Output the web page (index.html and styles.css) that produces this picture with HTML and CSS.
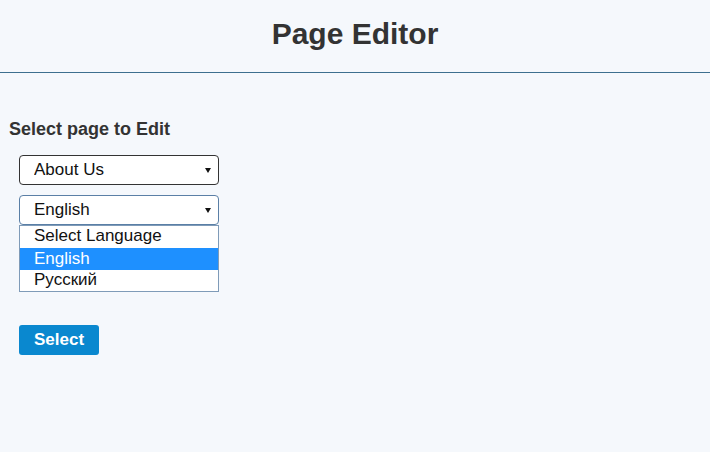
FILE: index.html
```html
<!DOCTYPE html>
<html lang="en">
<head>
    <meta charset="UTF-8">
    <meta name="viewport" content="width=device-width, initial-scale=1.0">
    <title>Page Editor</title>
    <link rel="stylesheet" href="styles.css">
</head>
<body>
    <header class="page-header">
        <h1>Page Editor</h1>
    </header>
    <main class="content">
        <form class="edit-form">
            <label class="form-label" for="pageSelect">Select page to Edit</label>
            <div class="select-wrap">
                <select id="pageSelect" class="form-select">
                    <option>About Us</option>
                </select>
            </div>
            <!-- Language picker, shown open -->
            <div class="select-wrap is-open">
                <select id="langSelect" class="form-select">
                    <option>English</option>
                </select>
                <ul class="select-list">
                    <li>Select Language</li>
                    <li class="active">English</li>
                    <li>Русский</li>
                </ul>
            </div>
            <button type="submit" class="btn-select">Select</button>
        </form>
    </main>
</body>
</html>
```

FILE: styles.css
```css
body {
    margin: 0;
    font-family: 'Liberation Sans', Arial, sans-serif;
    background-color: #f5f8fc;
    color: #333;
}

.page-header {
    height: 73px;
    box-sizing: border-box;
    padding-top: 19px;
    border-bottom: 1px solid #3d6f8f;
    text-align: center;
}

.page-header h1 {
    margin: 0;
    font-size: 30px;
    line-height: 1;
    font-weight: bold;
    color: #333;
}

.content {
    padding: 46px 0 0 9px;
}

.edit-form {
    display: flex;
    flex-direction: column;
    align-items: flex-start;
}

.form-label {
    font-size: 18px;
    line-height: 21px;
    font-weight: bold;
    margin-bottom: 15px;
}

.select-wrap {
    position: relative;
    margin-left: 10px;
    margin-bottom: 10px;
}

.select-wrap::after {
    content: '';
    position: absolute;
    right: 8px;
    top: 13px;
    border-left: 3.5px solid transparent;
    border-right: 3.5px solid transparent;
    border-top: 5px solid #111;
    pointer-events: none;
}

.form-select {
    appearance: none;
    -webkit-appearance: none;
    display: block;
    width: 200px;
    height: 30px;
    box-sizing: border-box;
    padding: 0 20px 2px 14px;
    border: 1px solid #333;
    border-radius: 4px;
    background-color: #fff;
    font-family: inherit;
    font-size: 17px;
    color: #111;
}

.is-open .form-select {
    border-color: #5a7fa6;
}

.select-list {
    position: absolute;
    top: 30px;
    left: 0;
    width: 200px;
    box-sizing: border-box;
    margin: 0;
    padding: 0;
    list-style: none;
    background-color: #fff;
    border: 1px solid #7f9bb8;
    z-index: 2;
}

.select-list li {
    padding: 0 0 1px 14px;
    line-height: 21px;
    font-size: 17px;
    color: #111;
}

.select-list li:first-child,
.select-list li:last-child {
    line-height: 20.5px;
}

.select-list li.active {
    background-color: #1e90ff;
    color: #fff;
}

.btn-select {
    margin: 90px 0 0 10px;
    width: 80px;
    height: 30px;
    border: none;
    border-radius: 3px;
    background-color: #0a88cf;
    color: #fff;
    font-family: inherit;
    font-size: 17px;
    font-weight: bold;
    cursor: pointer;
}
```
